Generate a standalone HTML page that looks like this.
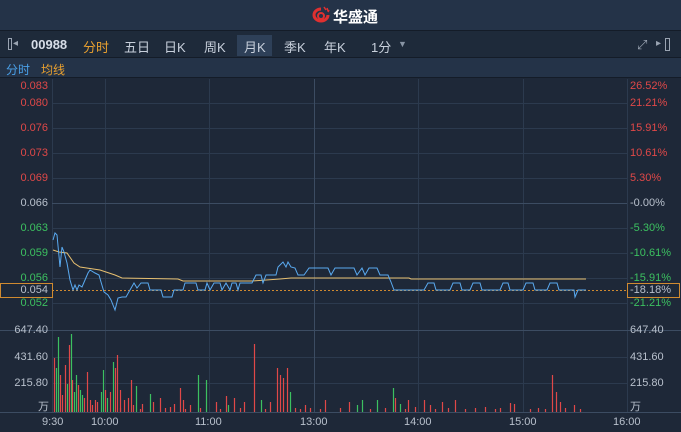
<!DOCTYPE html><html><head><meta charset="utf-8"><style>
*{margin:0;padding:0;box-sizing:border-box}
body{width:681px;height:432px;background:#1e2838;font-family:"Liberation Sans","Noto Sans CJK SC",sans-serif;overflow:hidden;position:relative;color:#c8d0dc}
.a{position:absolute;white-space:nowrap}
#hd{left:0;top:0;width:681px;height:30px;background:#243348}
#tb{left:0;top:30px;width:681px;height:28px;background:#1e2a3a;border-top:1px solid #141c28;border-bottom:1px solid #141c28}
#tab{left:0;top:58px;width:681px;height:20px;background:#243348;border-bottom:1px solid #141c28}
.t{font-size:13px;top:37px;color:#c8d0dc}
.l{font-size:11px;text-align:right;width:48px;left:0}
.r{font-size:11px;left:630px}
.red{color:#e04848}.grn{color:#3cc060}.gry{color:#b8c0cc}
</style></head><body>
<div id="hd" class="a"></div>
<svg class="a" style="left:311px;top:6px" width="20" height="18" viewBox="0 0 20 18"><path d="M10 3a7 6 0 1 0 7 6" stroke="#e03030" stroke-width="3" fill="none"/><circle cx="10" cy="10" r="3" stroke="#e03030" stroke-width="2" fill="none"/><path d="M13 1l2 3M16 2l1 3M18 4l-1 2" stroke="#e03030" stroke-width="1.5"/></svg>
<div class="a" style="left:333px;top:6px;font-size:15px;font-weight:bold;color:#fff">华盛通</div>
<div id="tb" class="a"></div>
<div class="a" style="left:8px;top:38px;width:4px;height:12px;border:1px solid #9aa4b2"></div>
<div class="a" style="left:13px;top:38px;font-size:10px;color:#9aa4b2">◂</div>
<div class="a t" style="left:31px;font-weight:bold;color:#d8dee8">00988</div>
<div class="a t" style="left:83px;color:#e8a030">分时</div>
<div class="a t" style="left:124px">五日</div>
<div class="a t" style="left:164px">日K</div>
<div class="a t" style="left:204px">周K</div>
<div class="a" style="left:237px;top:35px;width:35px;height:21px;background:#2e4058"></div>
<div class="a t" style="left:244px">月K</div>
<div class="a t" style="left:284px">季K</div>
<div class="a t" style="left:324px">年K</div>
<div class="a t" style="left:371px">1分</div>
<div class="a" style="left:398px;top:39px;font-size:9px;color:#8894a4">▼</div>
<div class="a" style="left:637px;top:37px;font-size:13px;color:#9aa4b2">⤢</div>
<div class="a" style="left:656px;top:38px;font-size:10px;color:#9aa4b2">▸</div>
<div class="a" style="left:665px;top:38px;width:5px;height:13px;border:1px solid #9aa4b2"></div>
<div id="tab" class="a"></div>
<div class="a" style="left:6px;top:61px;font-size:12px;color:#4aa0e8">分时</div>
<div class="a" style="left:41px;top:61px;font-size:12px;color:#e8a030">均线</div>
<svg class="a" style="left:0;top:0" width="681" height="432">
<g stroke="#2c3a4e" stroke-width="1">
<line x1="52.5" y1="79" x2="52.5" y2="412"/><line x1="627.5" y1="79" x2="627.5" y2="412"/>
<line x1="105.5" y1="79" x2="105.5" y2="412"/><line x1="209.5" y1="79" x2="209.5" y2="412"/>
<line x1="418.5" y1="79" x2="418.5" y2="412"/><line x1="523.5" y1="79" x2="523.5" y2="412"/>
<line x1="52" y1="103.5" x2="627" y2="103.5"/><line x1="52" y1="128.5" x2="627" y2="128.5"/>
<line x1="52" y1="153.5" x2="627" y2="153.5"/><line x1="52" y1="178.5" x2="627" y2="178.5"/>
<line x1="52" y1="228.5" x2="627" y2="228.5"/><line x1="52" y1="253.5" x2="627" y2="253.5"/>
<line x1="52" y1="278.5" x2="627" y2="278.5"/><line x1="52" y1="303.5" x2="627" y2="303.5"/>
<line x1="52" y1="357.5" x2="627" y2="357.5"/><line x1="52" y1="383.5" x2="627" y2="383.5"/>
</g>
<g stroke="#3c4c62"><line x1="314.5" y1="79" x2="314.5" y2="412"/><line x1="52" y1="203.5" x2="627" y2="203.5"/><line x1="0" y1="330.5" x2="681" y2="330.5"/><line x1="0" y1="412.5" x2="681" y2="412.5"/></g>
<line x1="52" y1="290.5" x2="627" y2="290.5" stroke="#d08a30" stroke-dasharray="2,2"/>
<polyline fill="none" stroke="#e8c070" stroke-width="1" points="53,250 59,252 67,253 74,263 80,267 100,270 115,275 122,278 178,279 183,281 252,281 280,279 291,278 409,278 411,279 586,279"/>
<polyline fill="none" stroke="#5aaaf0" stroke-width="1" points="53,240 55,233 57,235 60,267 62,247 64,252 67,263 70,280 73,290 75,285 77,290 79,285 82,287 85,280 88,273 90,270 95,273 99,275 101,282 104,292 108,295 111,300 115,310 118,298 122,297 126,297 130,290 134,283 137,288 141,283 148,283 150,290 161,290 163,297 172,297 174,290 183,290 185,283 196,283 198,290 205,290 207,283 210,290 214,283 220,283 222,290 226,283 230,290 232,283 236,283 238,290 240,283 252,283 256,275 261,275 263,283 266,275 276,275 278,267 283,262 286,267 288,262 291,267 295,268 298,275 304,275 309,268 328,268 331,275 335,268 354,268 357,275 362,268 365,275 369,268 377,268 380,275 388,275 391,282 394,290 424,290 428,283 434,283 436,290 450,290 453,283 460,283 462,290 470,290 473,283 480,283 482,290 500,290 503,283 508,283 510,290 523,290 526,283 533,283 535,290 547,290 550,283 557,283 559,290 574,290 575,297 578,290 586,290"/>
<g stroke-width="1.2" id="vb"></g>
<rect x="0.5" y="283.5" width="52" height="14" fill="none" stroke="#d08a30"/>
<rect x="627.5" y="283.5" width="52" height="14" fill="none" stroke="#d08a30"/>
</svg>
<div class="a l red" style="top:80px">0.083</div>
<div class="a l red" style="top:97px">0.080</div>
<div class="a l red" style="top:122px">0.076</div>
<div class="a l red" style="top:147px">0.073</div>
<div class="a l red" style="top:172px">0.069</div>
<div class="a l gry" style="top:197px">0.066</div>
<div class="a l grn" style="top:222px">0.063</div>
<div class="a l grn" style="top:247px">0.059</div>
<div class="a l grn" style="top:272px">0.056</div>
<div class="a l gry" style="top:284px">0.054</div>
<div class="a l grn" style="top:297px">0.052</div>
<div class="a r red" style="top:80px">26.52%</div>
<div class="a r red" style="top:97px">21.21%</div>
<div class="a r red" style="top:122px">15.91%</div>
<div class="a r red" style="top:147px">10.61%</div>
<div class="a r red" style="top:172px">5.30%</div>
<div class="a r gry" style="top:197px">-0.00%</div>
<div class="a r grn" style="top:222px">-5.30%</div>
<div class="a r grn" style="top:247px">-10.61%</div>
<div class="a r grn" style="top:272px">-15.91%</div>
<div class="a r gry" style="top:284px">-18.18%</div>
<div class="a r grn" style="top:297px">-21.21%</div>
<div class="a l gry" style="top:324px">647.40</div>
<div class="a l gry" style="top:351px">431.60</div>
<div class="a l gry" style="top:377px">215.80</div>
<div class="a gry" style="left:38px;top:398px;font-size:11px">万</div>
<div class="a r gry" style="top:324px">647.40</div>
<div class="a r gry" style="top:351px">431.60</div>
<div class="a r gry" style="top:377px">215.80</div>
<div class="a r gry" style="top:398px">万</div>
<div class="a gry" style="left:42px;top:416px;font-size:11px">9:30</div>
<div class="a gry" style="left:91px;top:416px;font-size:11px">10:00</div>
<div class="a gry" style="left:195px;top:416px;font-size:11px">11:00</div>
<div class="a gry" style="left:300px;top:416px;font-size:11px">13:00</div>
<div class="a gry" style="left:404px;top:416px;font-size:11px">14:00</div>
<div class="a gry" style="left:509px;top:416px;font-size:11px">15:00</div>
<div class="a gry" style="left:613px;top:416px;font-size:11px">16:00</div>
<script>
var d="54r358 56g368 58g337 60r375 62r395 65r365 67g384 69r345 71g334 72r380 74g392 76g375 78r385 80g390 82g395 84r398 87r372 90r400 92r405 95r400 97r402 101g392 103g370 105r390 107g398 110r392 113g362 115r368 117r355 120r390 124r400 128r398 131r380 133r405 136g386 142r404 150g394 153r402 160r398 174r404 180r388 183r400 190r405 198g375 206g380 216r402 226r396 228g405 234r398 244r402 254r344 261g400 270r402 277r368 280r375 283r378 287r368 290g392 305r405 325r400 349r402 357g405 362g400 377g400 393g388 395r398 400g404 408r400 424r400 430r405 442r402 455r400 510r403 514r404 552r375 556r392 560r402 574r405 120r408 140r409 165r408 170r407 185r409 200r408 220r409 240r408 265r409 295r408 300r409 310r408 320r409 340r408 370r409 385r408 405r409 415r407 435r409 448r408 465r409 475r408 485r407 495r409 500r408 530r409 538r408 545r409 565r408 580r409";
var s="";d.split(" ").forEach(function(t){var m=t.match(/(\d+)([rg])(\d+)/);s+='<line x1="'+m[1]+'.5" x2="'+m[1]+'.5" y1="'+m[3]+'" y2="412" stroke="'+(m[2]=="r"?"#e04848":"#3cc060")+'"/>';});
document.getElementById("vb").innerHTML=s;
</script>
</body></html>
